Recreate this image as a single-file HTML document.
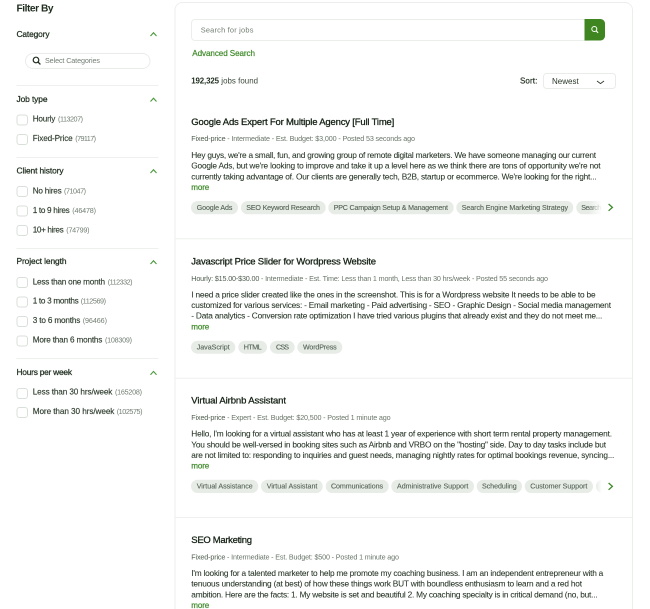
<!DOCTYPE html>
<html lang="en">
<head>
<meta charset="utf-8">
<title>Filter By</title>
<style>
html,body{margin:0;padding:0;background:#fff;width:650px;height:609px;overflow:hidden}
svg{display:block;filter:blur(.25px)}
text{font-family:"Liberation Sans",sans-serif;white-space:pre}
.h{font-size:8.4px;fill:#1f2d1f;stroke:#1f2d1f;stroke-width:.25px}
.o{font-size:8.2px;fill:#2f3d2f;stroke:#2f3d2f;stroke-width:.14px}
.c{font-size:7.2px;fill:#727d72}
.t{font-size:9.5px;fill:#142014;stroke:#142014;stroke-width:.28px}
.m{font-size:7.2px;fill:#6a766a}
.b{font-size:8.3px;fill:#263426;stroke:#263426;stroke-width:.05px}
.g{font-size:8.1px;fill:#3f8a2a;stroke:#3f8a2a;stroke-width:.2px}
.k{font-size:7.1px;fill:#566456;stroke:#566456;stroke-width:.12px}
.d{stroke:#eef0ee;stroke-width:1}
.cb{fill:#fff;stroke:#d9dfd9;stroke-width:1}
.ch{fill:none;stroke:#4a9a3a;stroke-width:1.1}
.tag{fill:#e7ece7}
.ar{fill:none;stroke:#3f8a2a;stroke-width:1.3}
</style>
</head>
<body>
<svg width="650" height="609" viewBox="0 0 650 609" xmlns="http://www.w3.org/2000/svg">
<defs>
<linearGradient id="fade" x1="0" x2="1" y1="0" y2="0"><stop offset="0" stop-color="#fff" stop-opacity="0"/><stop offset="1" stop-color="#fff"/></linearGradient>
</defs>

<!-- Sidebar -->
<text x="16.5" y="11.5" textLength="37" style="font-size:10.2px;font-weight:bold;fill:#1f2d1f">Filter By</text>

<text class="h" x="16.5" y="37" textLength="33">Category</text>
<path class="ch" d="M150.5 36l3-3.3 3 3.3"/>
<rect x="25.5" y="53.5" width="124.5" height="15" rx="7.5" fill="#fff" stroke="#e9ece9"/>
<circle cx="36" cy="60" r="2.8" fill="none" stroke="#1f2d1f" stroke-width="1.2"/>
<path d="M38 62l2.4 2.4" stroke="#1f2d1f" stroke-width="1.3"/>
<text class="c" x="45" y="62.8" textLength="55">Select Categories</text>
<line class="d" x1="16.5" x2="158.5" y1="85.5" y2="85.5"/>

<text class="h" x="16.5" y="102" textLength="31">Job type</text>
<path class="ch" d="M150.5 101.5l3-3.3 3 3.3"/>
<rect class="cb" x="17" y="115" width="10.5" height="10" rx="2.5"/>
<text class="o" x="32.7" y="121.7" textLength="22.7">Hourly</text><text class="c" x="58" y="121.7" textLength="25">(113207)</text>
<rect class="cb" x="17" y="134.5" width="10.5" height="10" rx="2.5"/>
<text class="o" x="32.7" y="141" textLength="40">Fixed-Price</text><text class="c" x="75.3" y="141" textLength="20.7">(79117)</text>
<line class="d" x1="16.5" x2="158.5" y1="157.5" y2="157.5"/>

<text class="h" x="16.5" y="173.3" textLength="47">Client history</text>
<path class="ch" d="M150.5 173l3-3.3 3 3.3"/>
<rect class="cb" x="17" y="186.5" width="10.5" height="10" rx="2.5"/>
<text class="o" x="32.7" y="193.3" textLength="29">No hires</text><text class="c" x="64" y="193.3" textLength="22">(71047)</text>
<rect class="cb" x="17" y="206" width="10.5" height="10" rx="2.5"/>
<text class="o" x="32.7" y="213" textLength="37">1 to 9 hires</text><text class="c" x="72.3" y="213" textLength="23.7">(46478)</text>
<rect class="cb" x="17" y="225.5" width="10.5" height="10" rx="2.5"/>
<text class="o" x="32.7" y="232.3" textLength="31">10+ hires</text><text class="c" x="66.3" y="232.3" textLength="23.2">(74799)</text>
<line class="d" x1="16.5" x2="158.5" y1="248.5" y2="248.5"/>

<text class="h" x="16.5" y="264" textLength="50">Project length</text>
<path class="ch" d="M150.5 264l3-3.3 3 3.3"/>
<rect class="cb" x="17" y="277.5" width="10.5" height="10" rx="2.5"/>
<text class="o" x="32.7" y="284.3" textLength="72.3">Less than one month</text><text class="c" x="107.7" y="284.3" textLength="24.8">(112332)</text>
<rect class="cb" x="17" y="297" width="10.5" height="10" rx="2.5"/>
<text class="o" x="32.7" y="303.7" textLength="46">1 to 3 months</text><text class="c" x="80.7" y="303.7" textLength="25.3">(112569)</text>
<rect class="cb" x="17" y="316.5" width="10.5" height="10" rx="2.5"/>
<text class="o" x="32.7" y="323" textLength="47.7">3 to 6 months</text><text class="c" x="82.7" y="323" textLength="24.3">(96466)</text>
<rect class="cb" x="17" y="336" width="10.5" height="10" rx="2.5"/>
<text class="o" x="32.7" y="342.7" textLength="69.7">More than 6 months</text><text class="c" x="105" y="342.7" textLength="27">(108309)</text>
<line class="d" x1="16.5" x2="158.5" y1="358.5" y2="358.5"/>

<text class="h" x="16.5" y="375" textLength="55.5">Hours per week</text>
<path class="ch" d="M150.5 374.7l3-3.3 3 3.3"/>
<rect class="cb" x="17" y="388.5" width="10.5" height="10" rx="2.5"/>
<text class="o" x="32.7" y="394.7" textLength="79.7">Less than 30 hrs/week</text><text class="c" x="115" y="394.7" textLength="27">(165208)</text>
<rect class="cb" x="17" y="407.5" width="10.5" height="10" rx="2.5"/>
<text class="o" x="32.7" y="414" textLength="81.7">More than 30 hrs/week</text><text class="c" x="116.7" y="414" textLength="25.8">(102575)</text>

<!-- Main panel -->
<path d="M175 620V10a7.5 7.5 0 0 1 7.5-7.5H625a7.5 7.5 0 0 1 7.5 7.5V620" fill="#fff" stroke="#eceeec"/>

<rect x="191.5" y="19.5" width="400" height="21" rx="3.5" fill="#fff" stroke="#eceeec"/>
<path d="M584.5 19h16a4.5 4.5 0 0 1 4.5 4.5v12.5a4.5 4.5 0 0 1-4.5 4.5h-16z" fill="#3f8621"/>
<circle cx="594.3" cy="29" r="2.5" fill="none" stroke="#fff" stroke-width="1"/>
<path d="M596.1 30.8l2 2" stroke="#fff" stroke-width="1.1"/>
<text x="200.7" y="32.3" textLength="52.7" style="font-size:7.4px;fill:#727d72">Search for jobs</text>
<text class="g" x="192.3" y="56.2" textLength="62.7">Advanced Search</text>

<text x="191.3" y="83.3" textLength="27.7" style="font-size:7.9px;font-weight:bold;fill:#1f2d1f">192,325</text>
<text x="221.3" y="83.3" textLength="36.7" style="font-size:7.9px;fill:#3a483a">jobs found</text>
<text x="520" y="83.3" textLength="17.3" style="font-size:8px;fill:#1f2d1f;stroke:#1f2d1f;stroke-width:.18px">Sort:</text>
<rect x="543.5" y="73.5" width="72" height="15" rx="3" fill="#fff" stroke="#e9ece9"/>
<text x="552" y="84" textLength="26.7" style="font-size:8px;fill:#2a382a">Newest</text>
<path d="M597 81l3.5 2.6 3.5-2.6" fill="none" stroke="#2a382a" stroke-width=".9"/>

<!-- Job 1 -->
<text class="t" x="191.3" y="125" textLength="203">Google Ads Expert For Multiple Agency [Full Time]</text>
<text class="m" x="191.3" y="141" textLength="223.7"><tspan style="fill:#4f5d4f">Fixed-price</tspan> - Intermediate - Est. Budget: $3,000 - Posted 53 seconds ago</text>
<text class="b" x="191.3" y="158" textLength="404.7">Hey guys, we're a small, fun, and growing group of remote digital marketers. We have someone managing our current</text>
<text class="b" x="191.3" y="168.7" textLength="409.3">Google Ads, but we're looking to improve and take it up a level here as we think there are tons of opportunity we're not</text>
<text class="b" x="191.3" y="179.4" textLength="405.3">currently taking advantage of. Our clients are generally tech, B2B, startup or ecommerce. We're looking for the right...</text>
<text class="g" x="191.3" y="190" textLength="18">more</text>
<rect class="tag" x="191" y="201" width="47" height="13.3" rx="6.6"/><text class="k" x="196.7" y="209.9" textLength="35.7">Google Ads</text>
<rect class="tag" x="241" y="201" width="84.7" height="13.3" rx="6.6"/><text class="k" x="246.3" y="209.9" textLength="73.7">SEO Keyword Research</text>
<rect class="tag" x="328.3" y="201" width="125.4" height="13.3" rx="6.6"/><text class="k" x="333.7" y="209.9" textLength="114.3">PPC Campaign Setup &amp; Management</text>
<rect class="tag" x="456.3" y="201" width="117" height="13.3" rx="6.6"/><text class="k" x="461.7" y="209.9" textLength="106.3">Search Engine Marketing Strategy</text>
<rect class="tag" x="576.3" y="201" width="50" height="13.3" rx="6.6"/><text class="k" x="581.3" y="209.9" textLength="20">Search</text>
<rect x="588" y="199" width="14" height="17" fill="url(#fade)"/><rect x="601.5" y="199" width="30" height="17" fill="#fff"/>
<path class="ar" d="M608.6 204l3.8 3.4-3.8 3.4"/>
<line class="d" x1="175" x2="632" y1="238.7" y2="238.7"/>

<!-- Job 2 -->
<text class="t" x="191.3" y="264.3" textLength="184.7">Javascript Price Slider for Wordpress Website</text>
<text class="m" x="191.3" y="281" textLength="356.7"><tspan style="fill:#4f5d4f">Hourly: $15.00-$30.00</tspan> - Intermediate - Est. Time: Less than 1 month, Less than 30 hrs/week - Posted 55 seconds ago</text>
<text class="b" x="191.3" y="297.3" textLength="404.3">I need a price slider created like the ones in the screenshot. This is for a Wordpress website It needs to be able to be</text>
<text class="b" x="191.3" y="308" textLength="419.7">customized for various services: - Email marketing - Paid advertising - SEO - Graphic Design - Social media management</text>
<text class="b" x="191.3" y="318.7" textLength="411">- Data analytics - Conversion rate optimization I have tried various plugins that already exist and they do not meet me...</text>
<text class="g" x="191.3" y="329.4" textLength="18">more</text>
<rect class="tag" x="191" y="340.7" width="44.3" height="13" rx="6.5"/><text class="k" x="196.7" y="349.3" textLength="33">JavaScript</text>
<rect class="tag" x="238.3" y="340.7" width="28.7" height="13" rx="6.5"/><text class="k" x="243.7" y="349.3" textLength="18">HTML</text>
<rect class="tag" x="270" y="340.7" width="24.7" height="13" rx="6.5"/><text class="k" x="276" y="349.3" textLength="13">CSS</text>
<rect class="tag" x="297.3" y="340.7" width="45" height="13" rx="6.5"/><text class="k" x="303" y="349.3" textLength="33.7">WordPress</text>
<line class="d" x1="175" x2="632" y1="378.3" y2="378.3"/>

<!-- Job 3 -->
<text class="t" x="191.3" y="403.6" textLength="94.7">Virtual Airbnb Assistant</text>
<text class="m" x="191.3" y="420.2" textLength="199.3"><tspan style="fill:#4f5d4f">Fixed-price</tspan> - Expert - Est. Budget: $20,500 - Posted 1 minute ago</text>
<text class="b" x="191.3" y="436.6" textLength="420.7">Hello, I'm looking for a virtual assistant who has at least 1 year of experience with short term rental property management.</text>
<text class="b" x="191.3" y="447.3" textLength="414.7">You should be well-versed in booking sites such as Airbnb and VRBO on the "hosting" side. Day to day tasks include but</text>
<text class="b" x="191.3" y="458" textLength="423">are not limited to: responding to inquiries and guest needs, managing nightly rates for optimal bookings revenue, syncing...</text>
<text class="g" x="191.3" y="468.7" textLength="18">more</text>
<rect class="tag" x="191" y="479.7" width="67.3" height="13.3" rx="6.6"/><text class="k" x="196.7" y="488.6" textLength="56">Virtual Assistance</text>
<rect class="tag" x="261" y="479.7" width="61.7" height="13.3" rx="6.6"/><text class="k" x="266.7" y="488.6" textLength="50.7">Virtual Assistant</text>
<rect class="tag" x="325.7" y="479.7" width="63" height="13.3" rx="6.6"/><text class="k" x="331" y="488.6" textLength="52">Communications</text>
<rect class="tag" x="391.3" y="479.7" width="82.7" height="13.3" rx="6.6"/><text class="k" x="397" y="488.6" textLength="71.3">Administrative Support</text>
<rect class="tag" x="476.7" y="479.7" width="45.3" height="13.3" rx="6.6"/><text class="k" x="482" y="488.6" textLength="34.7">Scheduling</text>
<rect class="tag" x="524.7" y="479.7" width="68.3" height="13.3" rx="6.6"/><text class="k" x="530.3" y="488.6" textLength="57">Customer Support</text>
<rect class="tag" x="596" y="479.7" width="30" height="13.3" rx="6.6"/>
<rect x="596" y="478" width="6" height="17" fill="url(#fade)"/><rect x="601.5" y="478" width="30" height="17" fill="#fff"/>
<path class="ar" d="M608.6 483l3.8 3.4-3.8 3.4"/>
<line class="d" x1="175" x2="632" y1="517.5" y2="517.5"/>

<!-- Job 4 -->
<text class="t" x="191.3" y="543" textLength="60.7">SEO Marketing</text>
<text class="m" x="191.3" y="559.6" textLength="207.7"><tspan style="fill:#4f5d4f">Fixed-price</tspan> - Intermediate - Est. Budget: $500 - Posted 1 minute ago</text>
<text class="b" x="191.3" y="576" textLength="412">I'm looking for a talented marketer to help me promote my coaching business. I am an independent entrepreneur with a</text>
<text class="b" x="191.3" y="586.7" textLength="390.7">tenuous understanding (at best) of how these things work BUT with boundless enthusiasm to learn and a red hot</text>
<text class="b" x="191.3" y="597.4" textLength="406.3">ambition. Here are the facts: 1. My website is set and beautiful 2. My coaching specialty is in critical demand (no, but...</text>
<text class="g" x="191.3" y="608" textLength="18">more</text>
</svg>
</body>
</html>
